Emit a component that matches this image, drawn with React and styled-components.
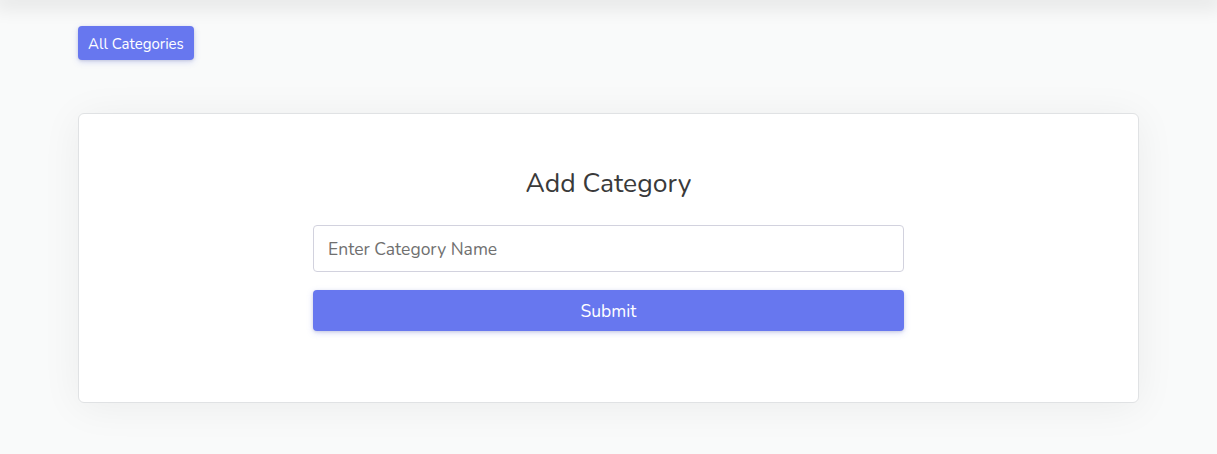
import styled, { createGlobalStyle } from "styled-components";

const GlobalStyle = createGlobalStyle`
  body {
    margin: 0;
    background: #f9fafa;
    font-family: "Nunito", "Open Sans", "Noto Sans", sans-serif;
    color: #333;
  }
`;

const Page = styled.div`
  min-height: 454px;
`;

const TopShade = styled.div`
  height: 0;
  box-shadow: 0 0 20px 6px rgba(0, 0, 0, 0.12);
`;

const Container = styled.div`
  padding: 26px 78px 0;
`;

const Button = styled.button`
  display: ${(p) => (p.$block ? "block" : "inline-block")};
  width: ${(p) => (p.$block ? "100%" : "auto")};
  height: ${(p) => (p.$block ? "41px" : "34px")};
  padding: ${(p) => (p.$block ? "0" : "2px 10px 0")};
  border: none;
  border-radius: 4px;
  background: #6777ef;
  color: #fff;
  font-family: inherit;
  font-size: ${(p) => (p.$block ? "17.5px" : "15px")};
  box-shadow: 0 2px 6px rgba(103, 119, 239, 0.25), 0 1px 3px rgba(0, 0, 0, 0.12);
  cursor: pointer;
`;

const Card = styled.div`
  margin-top: 53px;
  height: 290px;
  box-sizing: border-box;
  background: #fff;
  border: 1px solid #e0e2e4;
  border-radius: 6px;
  box-shadow: 0 4px 40px rgba(0, 0, 0, 0.06);
  display: flex;
  flex-direction: column;
  align-items: center;
  padding-top: 52px;
`;

const Title = styled.h2`
  margin: 0;
  font-size: 26.5px;
  font-weight: 400;
  line-height: 34px;
  color: #3a3a3a;
`;

const Form = styled.form`
  width: 591px;
  margin-top: 25px;
  display: flex;
  flex-direction: column;
  gap: 18px;
`;

const Input = styled.input`
  height: 47px;
  box-sizing: border-box;
  border: 1px solid #d2d2de;
  border-radius: 4px;
  padding: 0 14px;
  font-family: inherit;
  font-size: 17.5px;
  color: #333;
  outline: none;
  &::placeholder {
    color: #707070;
  }
`;

export default function App() {
  return (
    <Page>
      <GlobalStyle />
      <TopShade />
      <Container>
        <Button type="button">All Categories</Button>
        <Card>
          <Title>Add Category</Title>
          <Form onSubmit={(e) => e.preventDefault()}>
            <Input placeholder="Enter Category Name" />
            <Button $block type="submit">
              Submit
            </Button>
          </Form>
        </Card>
      </Container>
    </Page>
  );
}
